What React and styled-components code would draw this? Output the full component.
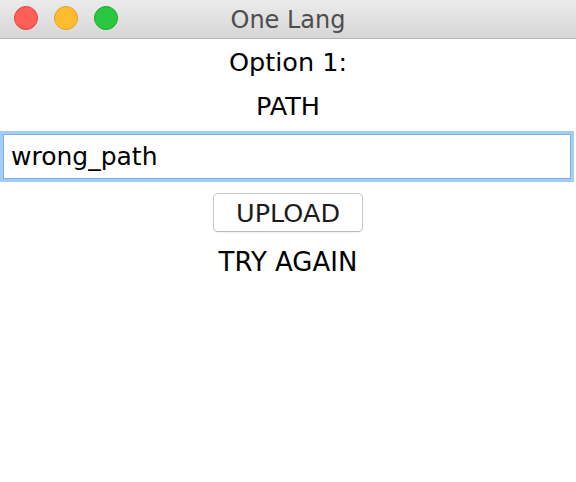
import React from "react";
import styled, { createGlobalStyle } from "styled-components";

const Global = createGlobalStyle`
  html, body { margin: 0; padding: 0; background: #ffffff; }
  body { width: 576px; height: 482px; overflow: hidden; font-family: "DejaVu Sans", "Liberation Sans", sans-serif; }
`;

const Window = styled.div`
  width: 576px;
  height: 482px;
  display: flex;
  flex-direction: column;
  background: #ffffff;
`;

const TitleBar = styled.div`
  position: relative;
  height: 38px;
  flex: none;
  display: flex;
  align-items: center;
  justify-content: center;
  background: linear-gradient(#ebebeb, #d6d6d6);
  border-bottom: 1px solid #b4b4b4;
`;

const Lights = styled.div`
  position: absolute;
  left: 14px;
  top: 6px;
  display: flex;
  gap: 16px;
`;

const Light = styled.span`
  width: 22px;
  height: 22px;
  border-radius: 50%;
  background: ${(p) => p.$bg};
  border: 1px solid ${(p) => p.$bd};
`;

const Title = styled.div`
  font-size: 24px;
  color: #4d4d4d;
  line-height: 1;
  padding-top: 1px;
`;

const Content = styled.div`
  display: flex;
  flex-direction: column;
  align-items: center;
  padding-top: 9px;
`;

const Label = styled.div`
  font-size: ${(p) => p.$fs || 25.5}px;
  color: #000;
  line-height: 29px;
  margin-top: ${(p) => p.$mt || 0}px;
`;

const Input = styled.input`
  box-sizing: border-box;
  align-self: flex-start;
  margin: 13px 0 0 3px;
  width: 568px;
  height: 45px;
  padding: 0 0 0 7px;
  font-family: "DejaVu Sans", "Liberation Sans", sans-serif;
  font-size: 25px;
  color: #000;
  background: #fff;
  border: 1px solid #7eaee2;
  outline: 3px solid #a2cdf7;
  outline-offset: 0;
`;

const Button = styled.button`
  box-sizing: border-box;
  margin-top: 14px;
  width: 150px;
  height: 39px;
  padding: 0;
  font-family: "DejaVu Sans", "Liberation Sans", sans-serif;
  font-size: 25.5px;
  color: #1c1c1c;
  background: #ffffff;
  border: 1px solid #c9c9c9;
  border-bottom-color: #b9b9b9;
  border-radius: 5px;
  box-shadow: 0 1px 1px rgba(0, 0, 0, 0.06);
`;

export default function App() {
  return (
    <Window>
      <Global />
      <TitleBar>
        <Lights>
          <Light $bg="#fd5f57" $bd="#e0443e" />
          <Light $bg="#febc2e" $bd="#dea123" />
          <Light $bg="#28c840" $bd="#1aab29" />
        </Lights>
        <Title>One Lang</Title>
      </TitleBar>
      <Content>
        <Label>Option 1:</Label>
        <Label $mt={15}>PATH</Label>
        <Input defaultValue="wrong_path" />
        <Button>UPLOAD</Button>
        <Label $mt={16} $fs={26}>TRY AGAIN</Label>
      </Content>
    </Window>
  );
}
